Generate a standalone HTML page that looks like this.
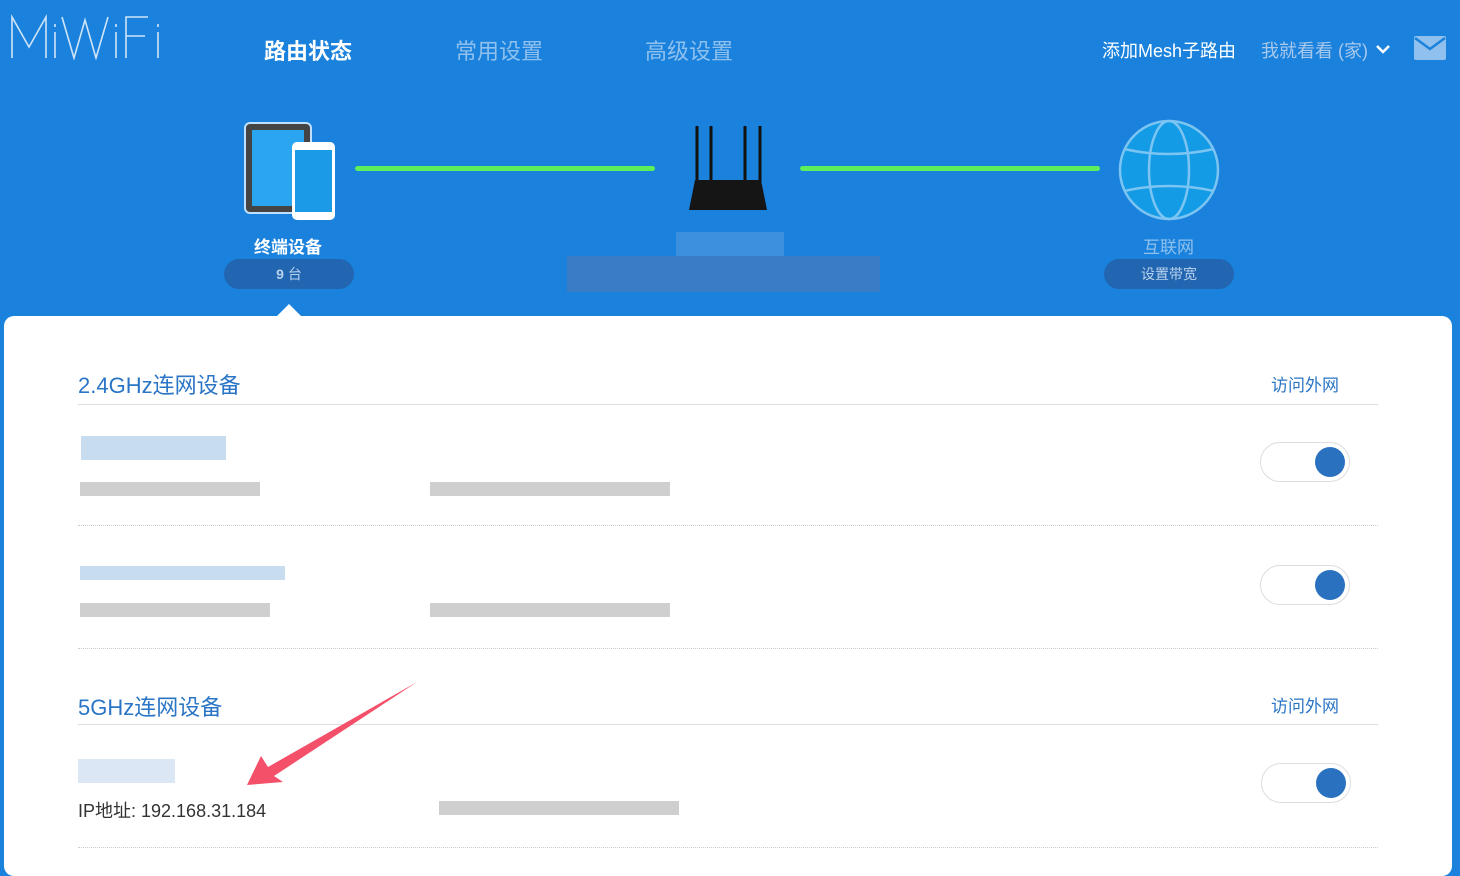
<!DOCTYPE html>
<html><head><meta charset="utf-8"><style>
*{margin:0;padding:0;box-sizing:border-box}
body{width:1460px;height:859px;background:#1a82dc;position:relative;overflow:hidden;font-family:"Liberation Sans","Noto Sans CJK SC",sans-serif}
.a{position:absolute}
.nav{font-size:22px;top:34px;color:#8fc0ee}
.card{left:4px;top:316px;width:1448px;height:560px;background:#fff;border-radius:10px}
.h{font-size:22px;color:#2a75c5}
.lk{font-size:17px;color:#2a75c5}
.line{height:1px;background:#ddd;left:78px;width:1300px}
.dot{height:0;border-top:1px dotted #ccc;left:78px;width:1300px}
.bl{background:#c8dcef}
.gr{background:#cfcfcf}
.tg{width:90px;height:40px;border:1px solid #ddd;border-radius:20px;background:#fff}
.tg i{position:absolute;right:4px;top:4px;width:30px;height:30px;border-radius:50%;background:#2a72c0}
</style></head><body>
<svg class="a" style="left:10px;top:14px" width="160" height="46"><g stroke="#cfe4f8" stroke-width="1.6" fill="none"><path d="M2 44V3l17 30L36 3v41"/><path d="M45 18v26M45 10v3"/><path d="M52 3l12 41 11-38 11 38 12-41"/><path d="M106 18v26M106 10v3"/><path d="M116 44V3h22M116 22h19"/><path d="M148 18v26M148 10v3"/></g></svg>
<div class="a nav" style="left:264px;color:#fff;font-weight:bold">路由状态</div>
<div class="a nav" style="left:455px">常用设置</div>
<div class="a nav" style="left:645px">高级设置</div>
<div class="a" style="left:1102px;top:37px;font-size:18px;color:#fff">添加Mesh子路由</div>
<div class="a" style="left:1261px;top:37px;font-size:18px;color:#a8c8ec">我就看看 (家)</div>
<svg class="a" style="left:1374px;top:42px" width="18" height="14"><path d="M3 4l6 6 6-6" stroke="#fff" stroke-width="2.5" fill="none"/></svg>
<svg class="a" style="left:1414px;top:36px" width="32" height="24"><rect width="32" height="24" rx="2" fill="#8fc0ee"/><path d="M1 2l15 11 15-11" stroke="#1a82dc" stroke-width="2.5" fill="none"/></svg>
<div class="a" style="left:244px;top:122px;width:68px;height:92px;background:#444;border-radius:6px;border:2px solid #bfe0ff"></div>
<div class="a" style="left:252px;top:130px;width:52px;height:76px;background:#2aa6f0"></div>
<div class="a" style="left:292px;top:142px;width:43px;height:78px;background:#fff;border-radius:5px"></div>
<div class="a" style="left:295px;top:150px;width:37px;height:62px;background:#1b9ae8"></div>
<div class="a" style="left:355px;top:166px;width:300px;height:5px;background:#5ef05a;border-radius:3px"></div>
<div class="a" style="left:800px;top:166px;width:300px;height:5px;background:#5ef05a;border-radius:3px"></div>
<svg class="a" style="left:685px;top:122px" width="86" height="92"><g stroke="#111" stroke-width="3"><path d="M12 4v60M26 4v60M60 4v60M75 4v60"/></g><path d="M10 58h66l6 30H4z" fill="#151515"/></svg>
<svg class="a" style="left:1118px;top:119px" width="102" height="102"><g fill="#139be6" stroke="#7cc4f2" stroke-width="2.5"><circle cx="51" cy="51" r="49"/><ellipse cx="51" cy="51" rx="20" ry="49" fill="none"/><path d="M6 30q45 10 90 0M6 72q45-10 90 0" fill="none"/></g></svg>
<div class="a" style="left:254px;top:233px;font-size:17px;font-weight:bold;color:#fff">终端设备</div>
<div class="a" style="left:224px;top:259px;width:130px;height:30px;border-radius:15px;background:#2265b0;color:#b8d2ee;font-size:14px;text-align:center;line-height:30px"><b>9</b> 台</div>
<div class="a" style="left:1143px;top:233px;font-size:17px;color:#8fc0ee">互联网</div>
<div class="a" style="left:1104px;top:259px;width:130px;height:30px;border-radius:15px;background:#2265b0;color:#b8d2ee;font-size:14px;text-align:center;line-height:30px">设置带宽</div>
<div class="a" style="left:676px;top:232px;width:108px;height:24px;background:#3d90de"></div>
<div class="a" style="left:567px;top:256px;width:313px;height:36px;background:#3a7cc6"></div>
<div class="a" style="left:277px;top:304px;border:12px solid transparent;border-bottom:12px solid #fff;border-top:0"></div>
<div class="a card"></div>
<div class="a h" style="left:78px;top:368px">2.4GHz连网设备</div>
<div class="a lk" style="left:1271px;top:371px">访问外网</div>
<div class="a line" style="top:404px"></div>
<div class="a bl" style="left:81px;top:436px;width:145px;height:24px"></div>
<div class="a gr" style="left:80px;top:482px;width:180px;height:14px"></div>
<div class="a gr" style="left:430px;top:482px;width:240px;height:14px"></div>
<div class="a tg" style="left:1260px;top:442px"><i></i></div>
<div class="a dot" style="top:525px"></div>
<div class="a bl" style="left:80px;top:566px;width:205px;height:14px"></div>
<div class="a gr" style="left:80px;top:603px;width:190px;height:14px"></div>
<div class="a gr" style="left:430px;top:603px;width:240px;height:14px"></div>
<div class="a tg" style="left:1260px;top:565px"><i></i></div>
<div class="a dot" style="top:648px"></div>
<div class="a h" style="left:78px;top:690px">5GHz连网设备</div>
<div class="a lk" style="left:1271px;top:692px">访问外网</div>
<div class="a line" style="top:724px"></div>
<div class="a bl" style="left:78px;top:759px;width:97px;height:24px;background:#dbe7f4"></div>
<div class="a" style="left:78px;top:797px;font-size:18px;color:#333">IP地址: 192.168.31.184</div>
<div class="a gr" style="left:439px;top:801px;width:240px;height:14px"></div>
<div class="a tg" style="left:1261px;top:763px"><i></i></div>
<div class="a dot" style="top:847px"></div>
<svg class="a" style="left:0;top:0" width="460" height="800"><path d="M247 785L261 756 268 767 417 682 274 776 283 782z" fill="#f5506a"/></svg>
</body></html>
